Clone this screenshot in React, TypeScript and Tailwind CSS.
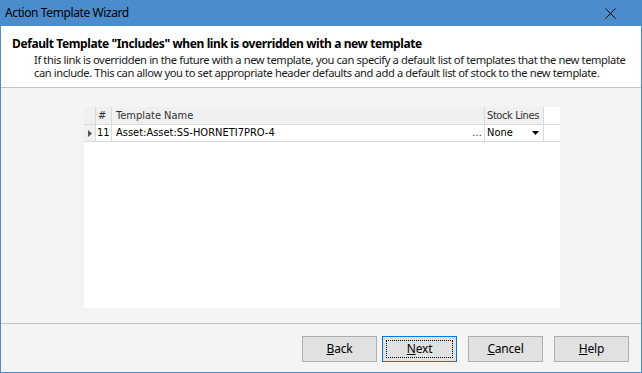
import React from "react";

const ui = { fontFamily: '"Noto Sans", "Open Sans", sans-serif' };
const grid = { fontFamily: '"DejaVu Sans Condensed", "DejaVu Sans", sans-serif' };

function Btn({ label, ul, focus }: { label: string; ul: number; focus?: boolean }) {
  return (
    <div
      className={`relative w-[75px] h-[26px] flex items-center justify-center text-[12px] text-black bg-[#e1e1e1] border tracking-[-0.2px] ${
        focus ? "border-[#0078d7]" : "border-[#adadad]"
      }`}
      style={ui}
    >
      {focus && <div className="absolute inset-[3px] border border-dotted border-black" />}
      <span>
        {label.slice(0, ul)}
        <span className="underline">{label[ul]}</span>
        {label.slice(ul + 1)}
      </span>
    </div>
  );
}

export default function App() {
  return (
    <div className="w-[642px] h-[373px] bg-[#4a8ccc] flex flex-col overflow-hidden">
      <div className="h-[26px] flex items-center justify-between pl-[5px] pr-[26px] text-[12px] text-black shrink-0 tracking-[-0.4px]" style={ui}>
        <span>Action Template Wizard</span>
        <svg width="11" height="11" viewBox="0 0 11 11">
          <path d="M0.5 0.5 L10.5 10.5 M10.5 0.5 L0.5 10.5" stroke="#000" strokeWidth="1" />
        </svg>
      </div>
      <div className="flex-1 mx-[1px] mb-[1px] flex flex-col bg-[#f4f4f4]">
        <div className="h-[62px] bg-white border-b border-[#c4c4c4] pl-[11px] pt-[10px] shrink-0 whitespace-nowrap" style={ui}>
          <div className="text-[12px] font-bold text-black leading-[16px] tracking-[-0.4px]">
            Default Template "Includes" when link is overridden with a new template
          </div>
          <div className="pl-[22px] mt-[1px] text-[11.2px] text-[#1a1a1a] leading-[13px] tracking-[-0.4px]">
            If this link is overridden in the future with a new template, you can specify a default list of templates that the new template
            <br />
            can include. This can allow you to set appropriate header defaults and add a default list of stock to the new template.
          </div>
        </div>
        <div className="flex-1 pt-[19px] pb-[15px] pl-[83px] pr-[81px] border-b border-[#c4c4c4]">
          <div className="h-full bg-white text-[11px] text-black whitespace-nowrap" style={grid}>
            <div className="flex h-[18px] border-b border-[#dadada]">
              <div className="w-[12px] bg-[#f0f0f0] border-r border-[#dadada]" />
              <div className="w-[16px] bg-[#f0f0f0] border-r border-[#dadada] pl-[2px] leading-[17px] text-[#333]">#</div>
              <div className="w-[373px] bg-[#f0f0f0] border-r border-[#dadada] pl-[4px] leading-[17px] text-[#333]">Template Name</div>
              <div className="w-[59px] bg-[#f0f0f0] border-r border-[#dadada] pl-[2px] leading-[17px] text-[#333] overflow-hidden tracking-[-0.4px]">Stock Lines</div>
            </div>
            <div className="flex h-[17px] border-b border-[#dadada]">
              <div className="w-[12px] bg-[#f0f0f0] border-r border-[#dadada] flex items-center justify-center">
                <svg width="4" height="7" viewBox="0 0 4 7">
                  <path d="M0 0 L4 3.5 L0 7 Z" fill="#555" />
                </svg>
              </div>
              <div className="w-[16px] border-r border-[#dadada] pl-[1px] leading-[16px]">11</div>
              <div className="w-[373px] border-r border-[#dadada] pl-[4px] pr-[2px] leading-[16px] flex justify-between">
                <span>Asset:Asset:SS-HORNETI7PRO-4</span>
                <span className="text-[#333]">…</span>
              </div>
              <div className="w-[59px] border-r border-[#dadada] pl-[2px] pr-[4px] leading-[16px] flex justify-between items-center">
                <span>None</span>
                <svg width="7" height="4" viewBox="0 0 7 4">
                  <path d="M0 0 L7 0 L3.5 4 Z" fill="#000" />
                </svg>
              </div>
            </div>
          </div>
        </div>
        <div className="h-[48px] shrink-0 flex items-center justify-end pr-[12px] pt-[1px]">
          <Btn label="Back" ul={0} />
          <div className="w-[5px]" />
          <Btn label="Next" ul={0} focus />
          <div className="w-[11px]" />
          <Btn label="Cancel" ul={0} />
          <div className="w-[11px]" />
          <Btn label="Help" ul={0} />
        </div>
      </div>
    </div>
  );
}
